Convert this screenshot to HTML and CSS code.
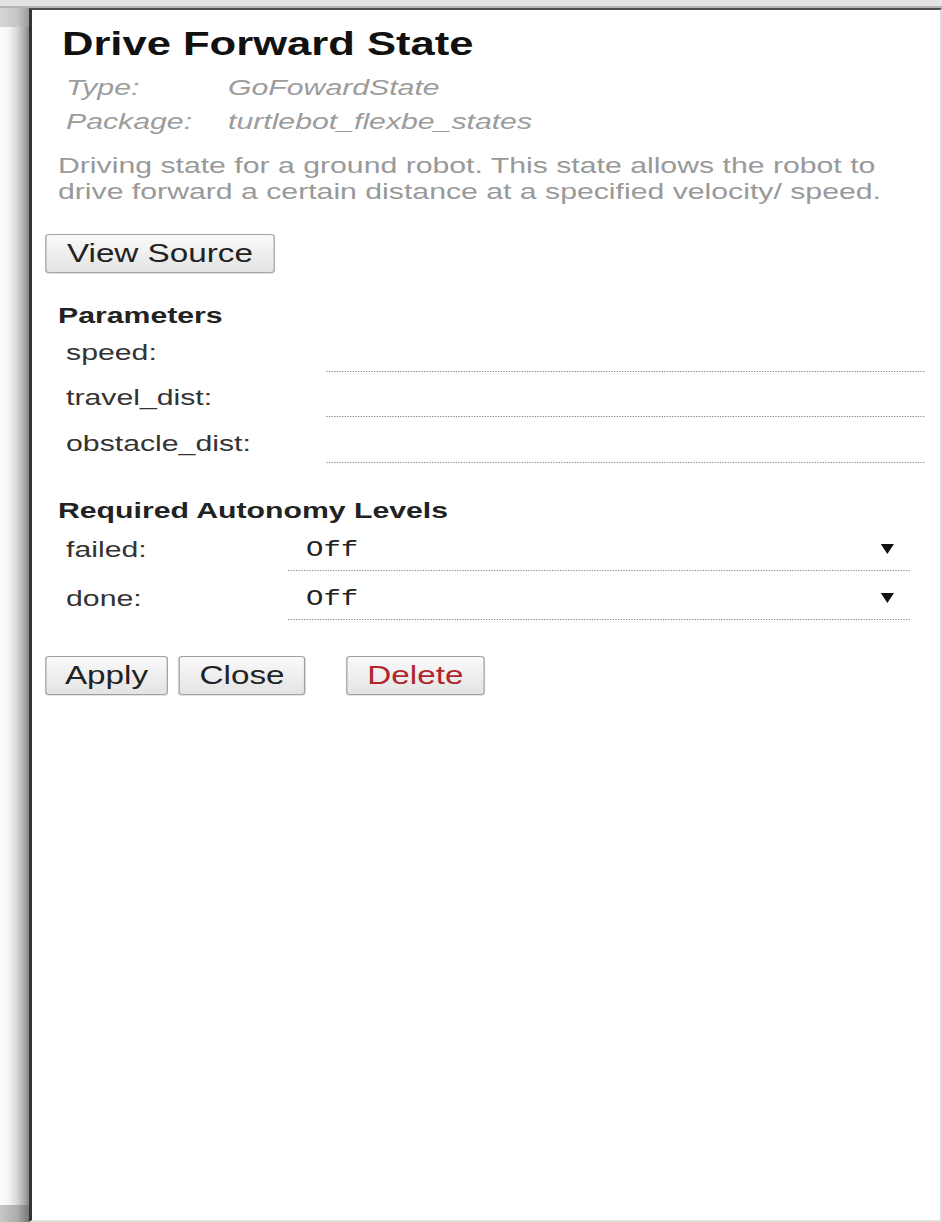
FILE: index.html
```html
<!DOCTYPE html>
<html lang="en">
<head>
<meta charset="utf-8">
<title>Drive Forward State</title>
<link rel="stylesheet" href="styles.css">
</head>
<body>
<div class="window">
  <div class="topbar"></div>
  <div class="main">
    <div class="strip">
      <div class="strip-top"></div>
      <div class="strip-body"></div>
      <div class="strip-bottom"></div>
    </div>
    <div class="panel">
      <div class="sheet">
        <h1 class="title">Drive Forward State</h1>
        <div class="meta">
          <span>Type:</span><span>GoFowardState</span>
          <span>Package:</span><span>turtlebot_flexbe_states</span>
        </div>
        <p class="desc">Driving state for a ground robot. This state allows the robot to drive forward a certain distance at a specified velocity/ speed.</p>
        <button class="btn btn-source" type="button">View Source</button>

        <h2 class="section-title">Parameters</h2>
        <div class="param"><span class="label">speed:</span><input class="field" type="text"></div>
        <div class="param"><span class="label">travel_dist:</span><input class="field" type="text"></div>
        <div class="param"><span class="label">obstacle_dist:</span><input class="field" type="text"></div>

        <h2 class="section-title section-gap">Required Autonomy Levels</h2>
        <div class="level"><span class="label">failed:</span><div class="select"><span class="value">Off</span><span class="caret"></span></div></div>
        <div class="level"><span class="label">done:</span><div class="select"><span class="value">Off</span><span class="caret"></span></div></div>

        <div class="actions">
          <button class="btn btn-apply" type="button">Apply</button>
          <button class="btn btn-close" type="button">Close</button>
          <button class="btn btn-delete" type="button">Delete</button>
        </div>
      </div>
    </div>
  </div>
</div>
</body>
</html>
```
FILE: styles.css
```css
html, body {
  margin: 0;
  padding: 0;
}
body {
  width: 942px;
  height: 1222px;
  overflow: hidden;
  background: #ffffff;
  font-family: "Liberation Sans", Arial, sans-serif;
}
.window {
  display: flex;
  flex-direction: column;
  height: 1222px;
}
.topbar {
  flex: none;
  height: 8px;
  background: linear-gradient(to bottom, #e4e4e4 0, #e4e4e4 6px, #b4b4b4 6px, #b4b4b4 8px);
}
.main {
  flex: 1;
  display: flex;
  min-height: 0;
}
.strip {
  flex: none;
  width: 29px;
  display: flex;
  flex-direction: column;
}
.strip-top {
  height: 19px;
  background: linear-gradient(to right, #d6d6d6, #c6c6c6 60%, #9a9a9a);
}
.strip-body {
  flex: 1;
  background: linear-gradient(to right, #fcfcfc 0%, #f4f4f4 30%, #d8d8d8 58%, #ababab 84%, #868686 100%);
}
.strip-bottom {
  height: 17px;
  background: linear-gradient(to right, #c8c8c8, #acacac 60%, #777777);
}
.panel {
  flex: 1;
  min-width: 0;
  overflow: hidden;
  background: #ffffff;
  border-left: 3px solid #343434;
  border-top: 2px solid #4e4e4e;
  border-right: 2px solid #dadada;
  border-bottom: 2px solid #e2e2e2;
}
.sheet {
  width: 687px;
  box-sizing: border-box;
  padding-top: 15px;
  transform: scale(1.32, 1);
  transform-origin: 0 0;
}
.title {
  margin: 0 0 0 22.7px;
  font-size: 33px;
  line-height: 38px;
  font-weight: bold;
  color: #111111;
}
.meta {
  margin-top: 8.2px;
  padding-left: 25.8px;
  display: grid;
  grid-template-columns: 122.7px 1fr;
  font-size: 22.9px;
  line-height: 33.7px;
  font-style: italic;
  color: #9c9c9c;
}
.desc {
  margin: 13px 0 0 19.7px;
  width: 645px;
  font-size: 22.9px;
  line-height: 26.7px;
  color: #999999;
}
.btn {
  display: inline-flex;
  align-items: center;
  justify-content: center;
  box-sizing: border-box;
  height: 38.6px;
  padding: 0;
  margin: 0;
  font-family: "Liberation Sans", Arial, sans-serif;
  font-size: 25.2px;
  color: #222222;
  border: 1px solid #a2a2a2;
  border-radius: 3px;
  background: linear-gradient(to bottom, #fafafa, #e3e3e3);
  box-shadow: 0 1px 1px rgba(0, 0, 0, 0.12);
}
.btn-source {
  margin: 29px 0 0 9.85px;
  width: 174.2px;
  height: 39px;
}
.section-title {
  margin: 27px 0 0 19.7px;
  font-size: 22.9px;
  line-height: 30px;
  font-weight: bold;
  color: #222222;
}
.section-gap {
  margin-top: 29px;
}
.param,
.level {
  display: flex;
  align-items: center;
  padding-left: 25.8px;
  font-size: 22.9px;
  color: #333333;
}
.param {
  height: 45.33px;
}
.level {
  height: 49px;
}
.param .label {
  width: 197.7px;
  flex: none;
}
.level .label {
  width: 168.2px;
  flex: none;
}
.field {
  width: 453px;
  height: 39px;
  box-sizing: border-box;
  margin: 0;
  padding: 0;
  border: none;
  border-bottom: 1px dotted #8a8a8a;
  background: transparent;
  outline: none;
  font: inherit;
}
.select {
  width: 471px;
  height: 43.4px;
  box-sizing: border-box;
  display: flex;
  align-items: center;
  justify-content: space-between;
  padding: 0 12px 0 13.6px;
  border-bottom: 1px dotted #8a8a8a;
  font-family: "Liberation Mono", "Courier New", monospace;
  font-size: 22px;
  color: #222222;
}
.value {
  padding-top: 4px;
}
.caret {
  width: 0;
  height: 0;
  margin-top: 1px;
  border-left: 5.2px solid transparent;
  border-right: 5.2px solid transparent;
  border-top: 10px solid #111111;
}
.actions {
  display: flex;
  margin-top: 33px;
  padding-left: 9.85px;
}
.btn-apply {
  width: 93.2px;
}
.btn-close {
  width: 95.4px;
  margin-left: 8.4px;
}
.btn-delete {
  width: 105.3px;
  margin-left: 31px;
  color: #b0262c;
}
```
